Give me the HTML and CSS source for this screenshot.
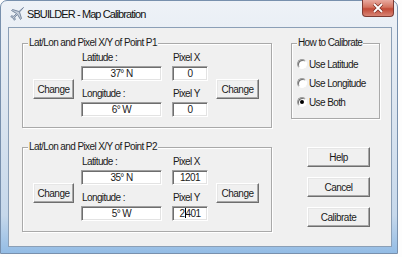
FILE: index.html
```html
<!DOCTYPE html>
<html lang="en">
<head>
    <meta charset="UTF-8">
    <title>SBUILDER - Map Calibration</title>
    <link rel="stylesheet" href="styles.css">
</head>
<body>
    <div class="window">
        <div class="titlebar">
            <svg class="app-icon" width="16" height="16" viewBox="0 0 16 16">
                <path d="M14.5 1.5 L10 5.5 L3.5 3.5 L2.5 4.5 L7.5 7.5 L4.8 10.3 L2.5 9.8 L1.7 10.6 L4 12 L5.4 14.3 L6.2 13.5 L5.7 11.2 L8.5 8.5 L11.5 13.5 L12.5 12.5 L10.5 6 Z" fill="#c3ccd8" stroke="#6f8098" stroke-width="0.9" stroke-linejoin="round"/>
            </svg>
            <span class="title">SBUILDER - Map Calibration</span>
            <div class="close">
                <svg width="12" height="10" viewBox="0 0 12 10">
                    <path d="M2 1 L10 9 M10 1 L2 9" stroke="#7a2b22" stroke-width="3.2"/>
                    <path d="M2 1 L10 9 M10 1 L2 9" stroke="#fff" stroke-width="1.8"/>
                </svg>
            </div>
        </div>

        <div class="client">
            <div class="points">
                <div class="group point">
                    <span class="caption">Lat/Lon and Pixel X/Y of Point P1</span>
                    <button class="btn change">Change</button>
                    <div class="fields">
                        <div class="field"><label>Latitude :</label><div class="input wide">37° N</div></div>
                        <div class="field"><label>Longitude :</label><div class="input wide">6° W</div></div>
                    </div>
                    <div class="fields pixels">
                        <div class="field"><label>Pixel X</label><div class="input small">0</div></div>
                        <div class="field"><label>Pixel Y</label><div class="input small">0</div></div>
                    </div>
                    <button class="btn change change-right">Change</button>
                </div>

                <div class="group point">
                    <span class="caption">Lat/Lon and Pixel X/Y of Point P2</span>
                    <button class="btn change">Change</button>
                    <div class="fields">
                        <div class="field"><label>Latitude :</label><div class="input wide">35° N</div></div>
                        <div class="field"><label>Longitude :</label><div class="input wide">5° W</div></div>
                    </div>
                    <div class="fields pixels">
                        <div class="field"><label>Pixel X</label><div class="input small">1201</div></div>
                        <div class="field"><label>Pixel Y</label><div class="input small">2<span class="caret"></span>401</div></div>
                    </div>
                    <button class="btn change change-right">Change</button>
                </div>
            </div>

            <div class="side">
                <div class="group how">
                    <span class="caption">How to Calibrate</span>
                    <div class="radio-row"><span class="radio"></span>Use Latitude</div>
                    <div class="radio-row"><span class="radio"></span>Use Longitude</div>
                    <div class="radio-row"><span class="radio checked"></span>Use Both</div>
                </div>
                <div class="actions">
                    <button class="btn action">Help</button>
                    <button class="btn action">Cancel</button>
                    <button class="btn action">Calibrate</button>
                </div>
            </div>
        </div>
    </div>
</body>
</html>
```

FILE: styles.css
```css
html, body {
    margin: 0;
    width: 402px;
    height: 257px;
    overflow: hidden;
    background-color: #fdfdfd;
}
body {
    font-family: "Liberation Sans", Arial, sans-serif;
    font-size: 10px;
    letter-spacing: -0.6px;
    color: #1a1a1a;
}
.window {
    width: 398px;
    height: 254px;
    box-sizing: border-box;
    border: 1px solid #7890ad;
    border-radius: 7px 7px 0 0;
    background: linear-gradient(#eef2f7, #dde6f0 40%, #c6d8eb 85%, #93bce5);
    padding: 0 5px 6px 7px;
    display: flex;
    flex-direction: column;
}
.titlebar {
    height: 26px;
    display: flex;
    align-items: center;
}
.app-icon {
    margin-left: 1px;
    margin-right: 2px;
}
.title {
    font-size: 11px;
    letter-spacing: -0.9px;
    color: #111;
}
.close {
    align-self: flex-start;
    margin-left: auto;
    margin-right: -2px;
    margin-top: -1px;
    width: 32px;
    height: 17px;
    box-sizing: border-box;
    border: 1px solid #7e3b33;
    border-top: none;
    border-radius: 0 0 4px 4px;
    background: linear-gradient(#e9aaa0, #d3735f 45%, #c24a37 55%, #d88474);
    display: flex;
    align-items: center;
    justify-content: center;
}
.client {
    flex: 1;
    background-color: #f0f0f0;
    border: 1px solid #8b9fb6;
    display: flex;
    gap: 19px;
    padding: 15px 0 0 13px;
}
.points {
    display: flex;
    flex-direction: column;
    gap: 19px;
}
.group {
    position: relative;
    box-sizing: border-box;
    border: 1px solid #a9a9a9;
    box-shadow: inset 1px 1px 0 #fff, 1px 1px 0 #fff;
}
.caption {
    position: absolute;
    top: -7px;
    left: 5px;
    padding: 0 1px;
    line-height: 12px;
    background-color: #f0f0f0;
    white-space: nowrap;
}
.point {
    width: 250px;
    height: 85px;
    display: flex;
    align-items: flex-start;
    padding: 8px 0 0 10px;
}
.btn {
    font-family: inherit;
    font-size: 10px;
    letter-spacing: -0.5px;
    color: #1a1a1a;
    background-color: #f0f0f0;
    height: 20px;
    padding: 0;
    box-sizing: border-box;
    border: 1px solid;
    border-color: #fff #6e6e6e #6e6e6e #fff;
    box-shadow: inset -1px -1px 0 #a8a8a8, inset 1px 1px 0 #e6e6e6;
}
.change {
    width: 41px;
    margin-top: 27px;
    margin-right: 7px;
}
.change-right {
    width: 43px;
    margin-left: 8px;
    margin-right: 0;
}
.fields {
    display: flex;
    flex-direction: column;
    gap: 7px;
}
.pixels {
    margin-left: 10px;
}
.field label {
    display: block;
    height: 12px;
    line-height: 12px;
    margin-bottom: 2px;
    padding-left: 1px;
}
.input {
    height: 15px;
    box-sizing: border-box;
    background-color: #fff;
    border: 1px solid;
    border-color: #a0a0a0 #fff #fff #a0a0a0;
    box-shadow: inset 1px 1px 0 #6e6e6e, inset -1px -1px 0 #e3e3e3;
    text-align: center;
    line-height: 13px;
}
.wide {
    width: 81px;
}
.small {
    width: 36px;
}
.caret {
    display: inline-block;
    width: 1px;
    height: 10px;
    background-color: #000;
    vertical-align: -1px;
}
.side {
    width: 89px;
    display: flex;
    flex-direction: column;
}
.how {
    height: 76px;
    padding: 14px 0 0 5px;
    display: flex;
    flex-direction: column;
    gap: 7px;
}
.radio-row {
    height: 12px;
    display: flex;
    align-items: center;
    gap: 2px;
}
.radio {
    width: 10px;
    height: 10px;
    box-sizing: border-box;
    border-radius: 50%;
    border: 1px solid;
    border-color: #9a9a9a #fff #fff #9a9a9a;
    background-color: #fff;
    box-shadow: inset 1px 1px 0 #6e6e6e;
    display: flex;
    align-items: center;
    justify-content: center;
}
.radio.checked::after {
    content: "";
    width: 4px;
    height: 4px;
    border-radius: 50%;
    background-color: #000;
}
.actions {
    display: flex;
    flex-direction: column;
    gap: 10px;
    margin-top: 28px;
    padding-left: 16px;
}
.action {
    width: 63px;
}
```
